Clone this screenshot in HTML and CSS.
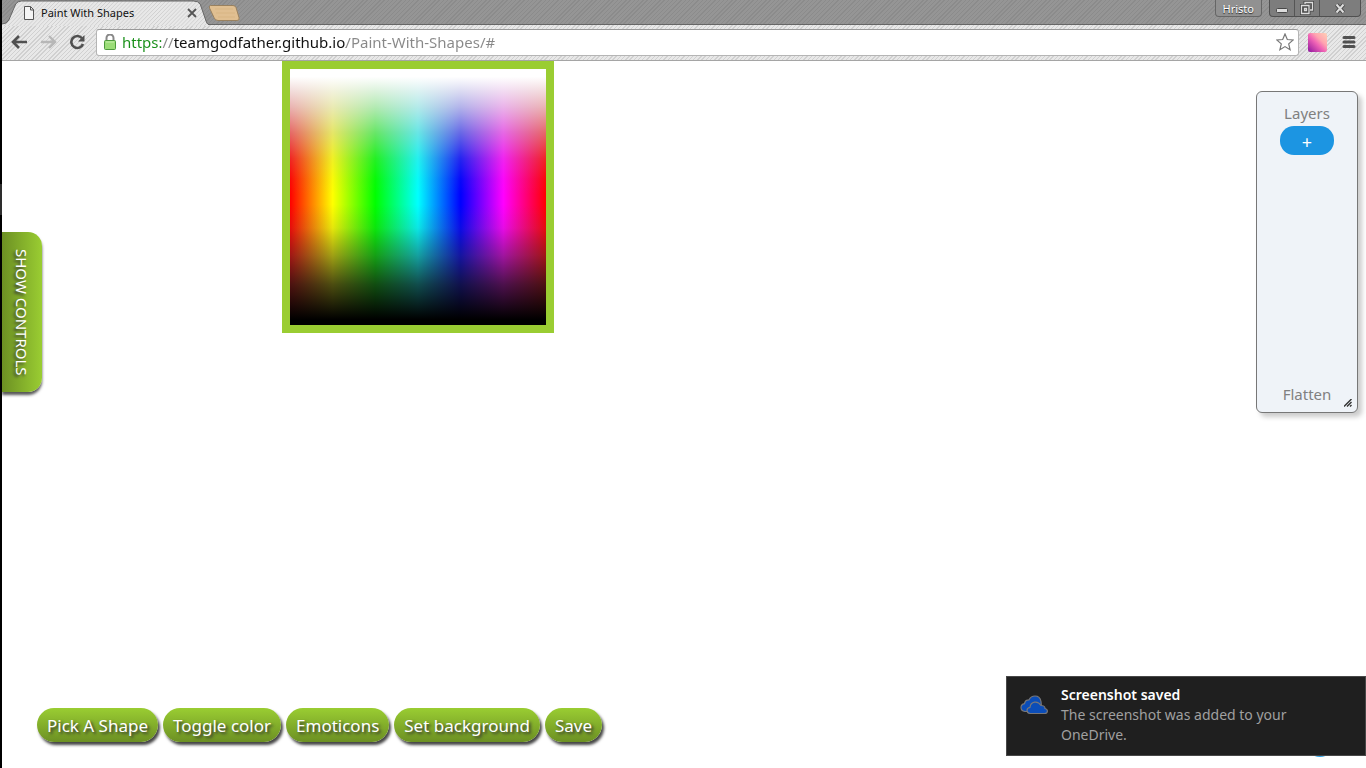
FILE: index.html
```html
<!DOCTYPE html>
<html lang="en">
<head>
<meta charset="utf-8">
<title>Paint With Shapes</title>
<link rel="stylesheet" href="styles.css">
</head>
<body>
<header class="browser">
  <div class="tab-strip">
    <div class="tab">
      <svg class="tab-shape" viewBox="0 0 210 26" preserveAspectRatio="none" aria-hidden="true">
        <defs><pattern id="weave" width="4" height="4" patternUnits="userSpaceOnUse"><rect width="4" height="4" fill="#e8e8e8"/><path d="M-1 1l2-2M0 4l4-4M3 5l2-2" stroke="#d0d0d0"/></pattern></defs>
        <path d="M0 26V24Q5 24 7 20L14 4Q16 1 20 1H195Q200 1 202 4L208 21Q209 24 210 24V26Z" fill="url(#weave)"/>
        <path d="M0 24Q5 24 7 20L14 4Q16 1 20 1H195Q200 1 202 4L208 21Q209 24 210 24" fill="none" stroke="#666"/>
      </svg>
      <svg class="page-icon" viewBox="0 0 12 14" aria-hidden="true"><path d="M1.5.5h6l3 3v10h-9zM7.500.5v3.500h3.500" fill="#f5f5f5" stroke="#555"/></svg>
      <span class="tab-title">Paint With Shapes</span>
      <button class="bare tab-close" aria-label="Close tab"><svg width="10" height="10" viewBox="0 0 10 10"><path d="M1 1l8 8M9 1L1 9" stroke="#555" stroke-width="1.800"/></svg></button>
    </div>
    <button class="bare new-tab" aria-label="New tab"><svg width="32" height="16" viewBox="0 0 32 16"><path d="M2.500.5H25q2 0 3 2l3 10q1 3-2 3H10q-3 0-4-3L1.500 3Q1 .5 2.500.5Z" fill="#e0bf91" stroke="#99815f"/><path d="M7 4h18M8 8h19M10 12h17" stroke="#d8b583"/></svg></button>
    <div class="window-area">
      <button class="profile">Hristo</button>
      <div class="window-controls">
        <button class="bare control" aria-label="Minimize"><svg width="14" height="14" viewBox="0 0 14 14"><rect x="1.500" y="7.500" width="11" height="4" rx="1" fill="#ddd" stroke="#484848"/></svg></button>
        <button class="bare control" aria-label="Restore"><svg width="14" height="14" viewBox="0 0 14 14"><path d="M5 3V1.500h7.500V9H10M1.500 4.500H9v8H1.500zM4.500 7.500h2v2h-2z" fill="none" stroke="#484848" stroke-width="3"/><path d="M5 3V1.500h7.500V9H10M1.500 4.500H9v8H1.500zM4.500 7.500h2v2h-2z" fill="none" stroke="#ddd" stroke-width="1.300"/></svg></button>
        <button class="bare control control-close" aria-label="Close"><svg width="14" height="14" viewBox="0 0 14 14"><path d="M3.500 3.500l7 8M10.500 3.500l-7 8" stroke="#484848" stroke-width="4"/><path d="M3.500 3.500l7 8M10.500 3.500l-7 8" stroke="#ddd" stroke-width="2"/></svg></button>
      </div>
    </div>
  </div>
  <div class="toolbar">
    <button class="bare" aria-label="Back"><svg width="17" height="14" viewBox="0 0 17 14"><path d="M8 1L2 7l6 6M2.500 7H16" fill="none" stroke="#505050" stroke-width="2.600"/></svg></button>
    <button class="bare" aria-label="Forward" disabled><svg width="17" height="14" viewBox="0 0 17 14"><path d="M9 1l6 6-6 6M14.500 7H1" fill="none" stroke="#b7b7b7" stroke-width="2.400"/></svg></button>
    <button class="bare" aria-label="Reload"><svg width="17" height="16" viewBox="0 0 17 16"><path d="M13 4.200A6 6 0 1 0 14 10" fill="none" stroke="#505050" stroke-width="2.600"/><path d="M15.500 1v6.500H9z" fill="#505050"/></svg></button>
    <div class="address">
      <svg width="12" height="16" viewBox="0 0 12 16" aria-hidden="true"><path d="M2.500 8V4a3.500 3.500 0 0 1 7 0v4" fill="none" stroke="#888" stroke-width="2"/><rect x=".5" y="6.500" width="11" height="9" rx="1" fill="#9bdd77" stroke="#4d9a3c"/><path d="M2 8h8" stroke="#c8f0b0"/></svg>
      <input class="url" type="text" aria-label="Address" value="https://teamgodfather.github.io/Paint-With-Shapes/#" spellcheck="false">
      <button class="bare" aria-label="Bookmark"><svg width="18" height="18" viewBox="0 0 18 18"><path d="M9 1l2.300 5.500 5.900.5-4.500 3.900 1.400 5.800L9 13.600l-5.100 3.100 1.400-5.800L.8 7l5.900-.5z" fill="#fff" stroke="#777" stroke-width="1.200"/></svg></button>
    </div>
    <button class="bare extension" aria-label="Extension"></button>
    <button class="bare" aria-label="Menu"><svg width="14" height="14" viewBox="0 0 14 14"><path d="M2 2.500h10M2 7h10M2 11.500h10" stroke="#505050" stroke-width="3" stroke-linecap="round"/></svg></button>
  </div>
</header>
<main class="page">
  <button class="show-controls">SHOW CONTROLS</button>
  <div class="palette" role="img" aria-label="Color palette"></div>
  <aside class="layers">
    <span>Layers</span>
    <button class="add-layer" aria-label="Add layer">+</button>
    <button class="bare flatten">Flatten</button>
    <svg class="grip" viewBox="0 0 8 8" aria-hidden="true"><path d="M0 7.500L7.500 0M3 7.500L7.500 3M6 7.500L7.500 6" stroke="#333" stroke-width="1.400"/></svg>
  </aside>
  <nav class="actions">
    <button class="action">Pick A Shape</button>
    <button class="action">Toggle color</button>
    <button class="action">Emoticons</button>
    <button class="action">Set background</button>
    <button class="action">Save</button>
  </nav>
  <span class="page-dot"></span>
  <section class="toast" role="status">
    <svg width="28" height="20" viewBox="0 0 28 20" aria-hidden="true"><g fill="#0b4db8" stroke="#77777a" stroke-width="1.200"><path d="M5 16.500Q1 16 1 12.500 1 9.500 4.500 8.700 5 4.800 9 4.800 11 1 15 1 20 1 21 6.500L22 16.500Z"/><path d="M10 18.500Q7 18 7 15.500 7 12.800 10 12.300 10.500 8 14.500 7.200 18.500 6.500 21 10.500 25 10.500 25 13.500 27.500 14 27.400 16.200 27.200 18.500 24.500 18.500Z"/></g></svg>
    <div class="toast-text"><strong>Screenshot saved</strong><p>The screenshot was added to your OneDrive.</p></div>
  </section>
</main>
</body>
</html>
```
FILE: styles.css
```css
* { box-sizing: border-box; }
body {
  margin: 0;
  min-height: 100vh;
  display: flex;
  flex-direction: column;
  border-left: 2px solid #000;
  border-image: linear-gradient(#000 184px, #2d2d2d 184px 215px, #000 215px) 0 0 0 2;
  background: #fff;
  font-family: "Noto Sans", "Open Sans", sans-serif;
}
button { font-family: inherit; }
.bare {
  display: flex;
  align-items: center;
  justify-content: center;
  border: 0;
  padding: 0;
  background: none;
}
.tab-strip {
  display: flex;
  height: 25px;
  border-bottom: 1px solid #666;
  background: repeating-linear-gradient(135deg, #8b8b8b 0 1px, #959595 1px 3px);
}
.tab {
  position: relative;
  display: flex;
  align-items: center;
  gap: 6px;
  width: 208px;
  padding: 1px 13px 0 21px;
}
.tab > * { position: relative; }
.tab .tab-shape {
  position: absolute;
  left: 0;
  top: 0;
  width: 206px;
  height: 26px;
}
.page-icon { width: 12px; height: 14px; }
.tab-title { flex: 1; font-size: 11px; color: #111; }
.new-tab { align-self: flex-start; margin: 5px 0 0 -2px; }
.window-area {
  display: flex;
  align-items: flex-start;
  gap: 7px;
  margin-left: auto;
  padding-right: 5px;
}
.profile {
  height: 17px;
  padding: 0 7px;
  border: 1px solid #666;
  border-top: 0;
  border-radius: 0 0 4px 4px;
  background: #919191;
  color: #fff;
  font-size: 11px;
  line-height: 18px;
  text-shadow: 0 1px 1px #222;
}
.window-controls {
  display: flex;
  height: 17px;
  border: 1px solid #505050;
  border-top: 0;
  border-radius: 0 0 4px 4px;
  background: #7d7d7d;
}
.control { width: 25px; border-right: 1px solid #555; }
.control-close { width: 40px; border-right: 0; }
.toolbar {
  display: flex;
  align-items: center;
  gap: 12px;
  height: 36px;
  padding: 0 10px 1px 9px;
  border-bottom: 1px solid #a5a5a5;
  background: repeating-linear-gradient(135deg, #d0d0d0 0 1px, #e8e8e8 1px 3px);
}
.address {
  flex: 1;
  display: flex;
  align-items: center;
  gap: 6px;
  height: 27px;
  padding: 0 4px 0 7px;
  margin: 0 -3px 0 -2px;
  border: 1px solid #b5b5b5;
  border-top-color: #999;
  border-radius: 3px;
  background: #fff;
}
.url {
  flex: 1;
  min-width: 0;
  border: 0;
  outline: 0;
  padding: 0;
  font: 15px/24px "Noto Sans", "Open Sans", sans-serif;
  color: transparent;
  background: linear-gradient(90deg, #178f17 0 39px, #888 39px 52px, #111 52px 224px, #888 224px);
  -webkit-background-clip: text;
  background-clip: text;
}
.extension {
  width: 19px;
  height: 19px;
  margin-right: 3px;
  border-radius: 2px;
  background: linear-gradient(45deg, #8d159f, #f064b5 45%, #ffa4b0 65%, #ffd0b5);
}
.page {
  position: relative;
  flex: 1;
  display: flex;
  align-items: flex-start;
}
.show-controls {
  width: 40px;
  height: 160px;
  margin-top: 171px;
  padding: 0;
  border: 0;
  border-radius: 0 14px 14px 0;
  background: linear-gradient(90deg, #6c9023, #9acd32);
  box-shadow: 0 3px 3px #555;
  color: #fff;
  font-size: 15px;
  line-height: 40px;
  text-shadow: 2px 2px 3px #333;
  writing-mode: vertical-rl;
}
.palette {
  width: 272px;
  height: 272px;
  margin-left: 240px;
  border: 8px solid #9acd32;
  background:
    linear-gradient(#fff 3%, rgba(240, 240, 240, .9) 9%, rgba(228, 228, 228, .78) 15%, rgba(205, 205, 205, .5) 25%, rgba(180, 180, 180, .2) 35%, rgba(150, 150, 150, .05) 43%, rgba(128, 128, 128, 0) 49%, rgba(100, 100, 100, 0) 53%, rgba(80, 80, 80, .14) 62%, rgba(45, 45, 45, .46) 73%, rgba(22, 22, 22, .76) 84%, #000 98%),
    linear-gradient(90deg, #f00, #ff0, #0f0, #0ff, #00f, #f0f, #f00);
  background-origin: padding-box;
}
.layers {
  position: relative;
  display: flex;
  flex-direction: column;
  align-items: center;
  width: 102px;
  height: 322px;
  margin: 30px 8px 0 auto;
  padding: 11px 0 8px;
  border: 1px solid #777;
  border-radius: 6px;
  background: #eff3f8;
  box-shadow: 4px 4px 5px #ccc;
  color: #808080;
  font-size: 15px;
  line-height: 20px;
}
.add-layer {
  width: 54px;
  height: 29px;
  margin-top: 3px;
  padding: 2px 0 0;
  border: 0;
  border-radius: 14px;
  background: #1c95e2;
  color: #fff;
  font-size: 18px;
  line-height: 26px;
}
.flatten { margin-top: auto; color: inherit; font-size: 15px; line-height: 20px; }
.grip { position: absolute; right: 5px; bottom: 5px; width: 8px; height: 8px; }
.actions {
  position: absolute;
  left: 35px;
  bottom: 26px;
  display: flex;
  gap: 5px;
}
.action {
  height: 34px;
  padding: 1px 10px 0;
  border: 0;
  border-radius: 17px;
  background: linear-gradient(#9acd32, #6c9023);
  box-shadow: 2px 3px 3px #444;
  color: #fff;
  font-size: 17px;
  line-height: 33px;
  text-shadow: 2px 2px 3px #333;
}
.page-dot {
  position: absolute;
  right: 32px;
  bottom: 11px;
  width: 28px;
  height: 28px;
  border-radius: 50%;
  background: #29a3e8;
}
.toast {
  position: absolute;
  right: 0;
  bottom: 12px;
  display: flex;
  gap: 13px;
  width: 360px;
  height: 80px;
  padding: 8px 50px 8px 13px;
  border: 1px solid #484848;
  background: #1f1f1f;
  color: #a0a0a0;
  font-size: 14px;
  line-height: 20px;
}
.toast svg { flex: none; margin-top: 10px; }
.toast strong { color: #fff; font-weight: 600; }
.toast p { margin: 0; }
```
